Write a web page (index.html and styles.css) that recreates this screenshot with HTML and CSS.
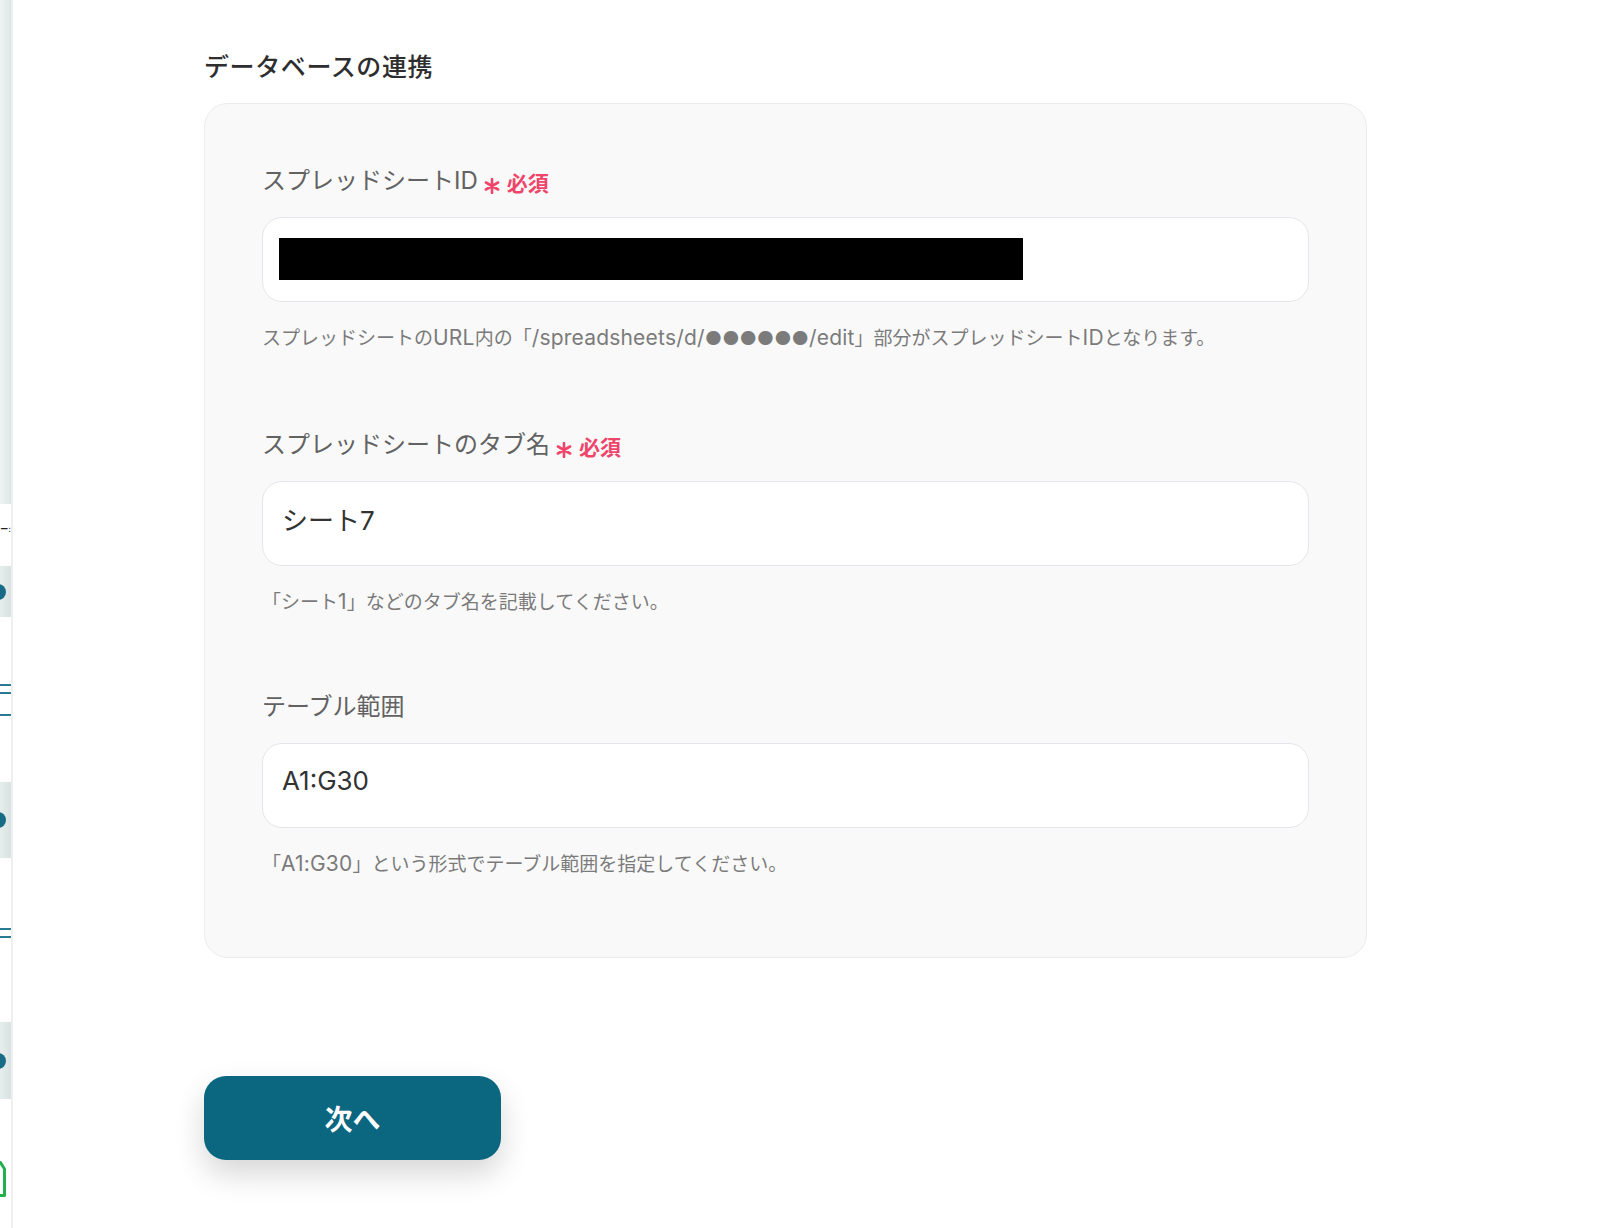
FILE: index.html
```html
<!DOCTYPE html>
<html lang="ja">
<head>
<meta charset="utf-8">
<title>データベースの連携</title>
<link rel="stylesheet" href="styles.css">
</head>
<body>
<div class="page">
  <aside class="side">
    <div class="side-top"></div>
    <div class="side-text"><span>ー:</span></div>
    <div class="side-block b1"><span class="dot"></span></div>
    <div class="side-lines l1"><span class="ln"></span><span class="ln"></span><span class="ln short"></span></div>
    <div class="side-block b2"><span class="dot"></span></div>
    <div class="side-lines l2"><span class="ln"></span><span class="ln"></span></div>
    <div class="side-block b3"><span class="dot"></span></div>
    <div class="side-icon"><svg class="green" viewBox="0 0 10 36" width="10" height="36"><path d="M-4 34.5H4.5V8L0.5 1.5H-4" fill="none" stroke="#22b04c" stroke-width="3" stroke-linejoin="round"/></svg></div>
  </aside>
  <main class="main">
    <h2 class="title">データベースの連携</h2>
    <section class="card">
      <div class="field">
        <div class="label">スプレッドシートID<span class="req"><svg class="ast" viewBox="0 0 16 16" width="16" height="16"><path d="M8 1V15M1.9 4.5L14.1 11.5M14.1 4.5L1.9 11.5" stroke="#f0456a" stroke-width="2.6" stroke-linecap="round"/></svg>必須</span></div>
        <div class="input"><span class="redact"></span></div>
        <p class="help">スプレッドシートの<span class="lat">URL</span>内の「<span class="lat">/spreadsheets/d/</span>●●●●●●<span class="lat">/edit</span>」部分がスプレッドシート<span class="lat">ID</span>となります。</p>
      </div>
      <div class="field">
        <div class="label">スプレッドシートのタブ名<span class="req"><svg class="ast" viewBox="0 0 16 16" width="16" height="16"><path d="M8 1V15M1.9 4.5L14.1 11.5M14.1 4.5L1.9 11.5" stroke="#f0456a" stroke-width="2.6" stroke-linecap="round"/></svg>必須</span></div>
        <div class="input"><span class="value">シート7</span></div>
        <p class="help">「シート<span class="lat">1</span>」などのタブ名を記載してください。</p>
      </div>
      <div class="field">
        <div class="label">テーブル範囲</div>
        <div class="input"><span class="value">A1:G30</span></div>
        <p class="help">「<span class="lat">A1:G30</span>」という形式でテーブル範囲を指定してください。</p>
      </div>
    </section>
    <button class="next" type="button">次へ</button>
  </main>
</div>
</body>
</html>
```

FILE: styles.css
```css
* { box-sizing: border-box; }
html, body { margin: 0; padding: 0; background: #fff; }
body {
  font-family: Inter, "Noto Sans CJK JP", sans-serif;
  color: #333;
}
.page {
  display: flex;
  min-height: 1228px;
  width: 1600px;
}
.side {
  width: 13px;
  flex: 0 0 13px;
  display: flex;
  flex-direction: column;
  overflow: hidden;
  background: #fff;
  border-right: 2px solid #eef0f0;
}
.side-top {
  height: 504px;
  background: linear-gradient(to right, #eef3f3, #dde6e6);
}
.side-text {
  height: 62px;
  display: flex;
  justify-content: flex-end;
  align-items: flex-start;
  padding-top: 19px;
  font-size: 8px;
  line-height: 12px;
  font-weight: 700;
  color: #222;
  white-space: nowrap;
}
.side-block {
  display: flex;
  align-items: center;
  background: linear-gradient(to right, #e7eded, #d9e2e2);
}
.b1 { height: 51px; }
.b2 { height: 76px; }
.b3 { height: 77px; }
.dot {
  width: 16px;
  height: 16px;
  border-radius: 50%;
  background: #186b86;
  margin-left: -10px;
}
.side-lines {
  display: flex;
  flex-direction: column;
  align-items: flex-end;
  gap: 6px;
}
.l1 { height: 165px; padding-top: 67px; }
.l2 { height: 164px; padding-top: 70px; }
.ln {
  display: block;
  width: 11px;
  height: 2px;
  background: #2a7891;
}
.l1 .short { margin-top: 14px; }
.side-icon {
  padding-top: 62px;
}
.green { display: block; }
.main {
  flex: 1;
  padding: 49px 0 0 191px;
}
.title {
  margin: 0 0 18px;
  font-size: 25px;
  line-height: 36px;
  font-weight: 500;
  letter-spacing: 0.6px;
  color: #2e2e2e;
}
.card {
  width: 1163px;
  background: #f9f9f9;
  border: 1px solid #ececec;
  border-radius: 24px;
  padding: 59px 57px 78px;
}
.field:nth-child(2) { margin-top: 74px; }
.field:nth-child(3) { margin-top: 72px; }
.label {
  display: flex;
  align-items: center;
  height: 36px;
  font-size: 24px;
  line-height: 36px;
  color: #626262;
  font-weight: 400;
}
.req {
  display: inline-flex;
  align-items: center;
  margin: 5px 0 0 6px;
  font-size: 21px;
  line-height: 26px;
  font-weight: 600;
  color: #f0456a;
}
.ast {
  margin: 5px 7px 0 0;
}
.input {
  margin-top: 18px;
  height: 85px;
  background: #fff;
  border: 1px solid #e3e6ea;
  border-radius: 20px;
  padding: 0 19px;
  display: flex;
  align-items: center;
}
.redact {
  display: block;
  width: 744px;
  height: 42px;
  background: #000;
  margin: -2px 0 0 -3px;
}
.value {
  font-size: 26px;
  font-weight: 400;
  color: #333;
  margin-top: -10px;
}
.help {
  margin: 22px 0 0;
  font-size: 19px;
  line-height: 28px;
  color: #7b7b7b;
}
.help .lat {
  font-size: 21px;
  letter-spacing: 0.2px;
}
.next {
  display: flex;
  align-items: center;
  justify-content: center;
  margin-top: 118px;
  width: 297px;
  height: 84px;
  border: none;
  border-radius: 22px;
  background: #0b6680;
  color: #fff;
  font-family: Inter, "Noto Sans CJK JP", sans-serif;
  font-size: 28px;
  font-weight: 700;
  box-shadow: 0 14px 30px rgba(0, 0, 0, 0.16);
  cursor: pointer;
}
```
